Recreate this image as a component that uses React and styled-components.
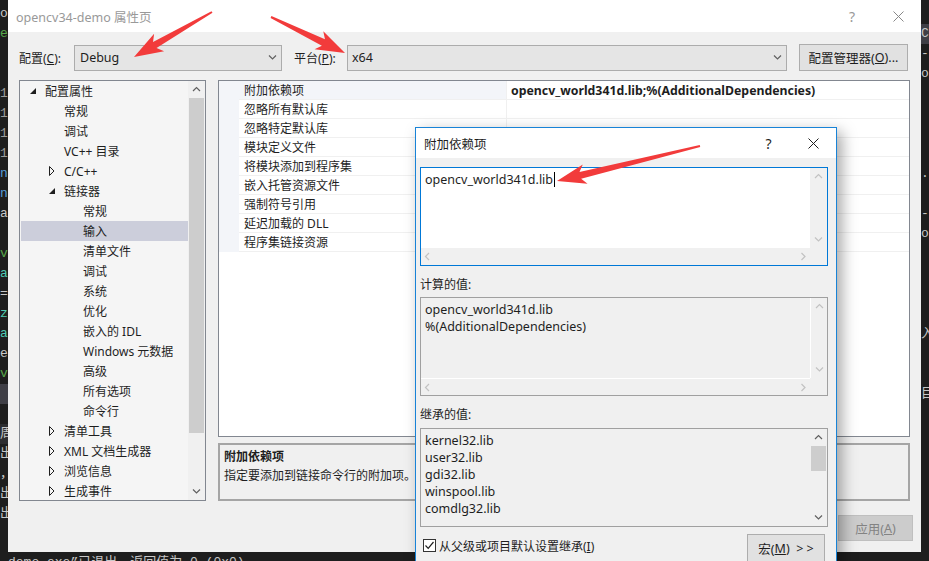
import React from 'react'
import styled, { createGlobalStyle } from 'styled-components'

const UI = `"Noto Sans", "Noto Sans CJK SC", sans-serif`

const GlobalStyle = createGlobalStyle`
  html, body { margin: 0; padding: 0; background: #1e1e1e; }
  body { font-family: ${UI}; font-size: 12px; color: #1e1e1e; }
  * { box-sizing: border-box; }
`

const Screen = styled.div`
  position: relative;
  display: flex;
  width: 929px;
  height: 561px;
  overflow: hidden;
  background: #1e1e1e;
`

const CodeStrip = styled.div`
  width: ${p => p.$w}px;
  flex-shrink: 0;
  overflow: hidden;
  padding-top: 4px;
  font: 13px/20px "Liberation Mono", "Noto Sans CJK SC", monospace;
  white-space: pre;
`

const CodeLine = styled.div`
  height: ${p => p.$h || 20}px;
  color: ${p => p.$c || '#c8c8c8'};
  background: ${p => p.$bg || 'transparent'};
`

const Desk = styled.div`
  width: 913px;
  flex-shrink: 0;
  display: flex;
  flex-direction: column;
`

const Dialog = styled.div`
  height: 552px;
  flex-shrink: 0;
  background: #f0f0f0;
  display: flex;
  flex-direction: column;
`

const TitleBar = styled.div`
  height: ${p => p.$h}px;
  flex-shrink: 0;
  background: #fff;
  display: flex;
  align-items: center;
  padding-left: 8px;
`

const TitleText = styled.div`
  flex: 1;
  font-size: 12.5px;
  color: ${p => (p.$active ? '#1e1e1e' : '#999')};
`

const TitleBtn = styled.div`
  width: ${p => p.$w}px;
  height: 100%;
  display: flex;
  align-items: center;
  justify-content: center;
  font-size: 14px;
  color: ${p => (p.$active ? '#1e1e1e' : '#999')};
`

const Body = styled.div`
  flex: 1;
  display: flex;
  flex-direction: column;
  padding: 12px 11px 0 11px;
`

const ConfigRow = styled.div`
  display: flex;
  align-items: center;
  height: 27px;
`

const Label = styled.div`
  width: ${p => p.$w}px;
  margin-left: ${p => p.$ml || 0}px;
  flex-shrink: 0;
`

const Mn = styled.span`
  text-decoration: underline;
`

const Combo = styled.div`
  width: ${p => p.$w}px;
  height: 26px;
  background: #e5e5e5;
  border: 1px solid #acacac;
  display: flex;
  align-items: center;
  justify-content: space-between;
  padding: 0 4px 0 ${p => p.$pl}px;
  font-size: 12.5px;
`

const Button = styled.div`
  width: ${p => p.$w}px;
  height: ${p => p.$h || 26}px;
  margin-left: ${p => p.$ml || 0}px;
  flex-shrink: 0;
  background: ${p => (p.$disabled ? '#cccccc' : '#e1e1e1')};
  border: 1px solid ${p => (p.$disabled ? '#bfbfbf' : '#adadad')};
  color: ${p => (p.$disabled ? '#838383' : '#1e1e1e')};
  display: flex;
  align-items: center;
  justify-content: center;
  font-size: 12.5px;
`

const MainArea = styled.div`
  display: flex;
  gap: 12px;
  margin-top: 9px;
  height: 421px;
`

const Tree = styled.div`
  width: 187px;
  border: 1px solid #828790;
  background: #f5f5f5;
  display: flex;
  overflow: hidden;
`

const TreeList = styled.div`
  flex: 1;
  padding: 0 0 0 1px;
`

const TreeRow = styled.div`
  height: 20px;
  display: flex;
  align-items: center;
  padding-left: ${p => p.$lvl * 19}px;
  background: ${p => (p.$sel ? '#cccedb' : 'transparent')};
  white-space: nowrap;
`

const Expander = styled.div`
  width: 24px;
  display: flex;
  justify-content: center;
  align-items: center;
`

const VScroll = styled.div`
  width: 17px;
  flex-shrink: 0;
  background: #f0f0f0;
  display: flex;
  flex-direction: column;
  border-left: ${p => (p.$sep ? '1px solid #fff' : 'none')};
`

const ArrowBox = styled.div`
  height: 17px;
  flex-shrink: 0;
  display: flex;
  align-items: center;
  justify-content: center;
`

const Thumb = styled.div`
  height: ${p => p.$h}px;
  margin: 0 1px;
  background: #cdcdcd;
`

const Spacer = styled.div`
  flex: 1;
`

const RightCol = styled.div`
  width: 692px;
  display: flex;
  flex-direction: column;
  gap: 6px;
`

const Grid = styled.div`
  height: 357px;
  border: 1px solid #828790;
  background: #fff;
`

const GridRow = styled.div`
  display: flex;
  height: 19px;
`

const Gutter = styled.div`
  width: 20px;
  background: #f3f5f9;
`

const NameCell = styled.div`
  width: 268px;
  padding-left: 5px;
  display: flex;
  align-items: center;
  background: ${p => (p.$sel ? '#f3f5f9' : '#fff')};
  border-bottom: 1px solid #f0f0f0;
  border-right: 1px solid #f0f0f0;
  white-space: nowrap;
`

const ValueCell = styled.div`
  flex: 1;
  padding-left: 4px;
  display: flex;
  align-items: center;
  font-weight: ${p => (p.$bold ? 700 : 400)};
  font-size: ${p => (p.$bold ? 12.3 : 12)}px;
  border-bottom: 1px solid #f0f0f0;
  white-space: nowrap;
`

const Desc = styled.div`
  height: 58px;
  border: 2px solid #a5a5a5;
  background: #f0f0f0;
  padding: 2px 0 0 4px;
  line-height: 19px;
`

const DescTitle = styled.div`
  font-weight: 700;
`

const Footer = styled.div`
  display: flex;
  justify-content: flex-end;
  gap: 4px;
  margin-top: 14px;
  margin-right: -3px;
`

const OutputLine = styled.div`
  flex: 1;
  overflow: hidden;
  padding: 3px 0 0 0;
  font: 13px/16px "Liberation Mono", "Noto Sans CJK SC", monospace;
  color: #c8c8c8;
  white-space: nowrap;
`

const SubDialog = styled.div`
  position: absolute;
  left: 415px;
  top: 127px;
  width: 422px;
  height: 450px;
  border: 1px solid #1883d7;
  background: #f0f0f0;
  box-shadow: 5px 5px 14px rgba(0, 0, 0, 0.35);
  display: flex;
  flex-direction: column;
`

const SubBody = styled.div`
  display: flex;
  flex-direction: column;
  padding: 9px 8px 0 4px;
`

const Field = styled.div`
  height: 99px;
  border: 1px solid ${p => p.$border};
  display: grid;
  grid-template-columns: 1fr 17px;
  grid-template-rows: ${p => (p.$hscroll ? '1fr 17px' : '1fr')};
  margin-top: ${p => p.$mt || 0}px;
`

const FieldText = styled.div`
  background: ${p => p.$bg};
  padding: 3px 0 0 4px;
  line-height: 17px;
  font-size: 12.5px;
  white-space: pre;
`

const HScroll = styled.div`
  background: #f0f0f0;
  display: flex;
  align-items: center;
  justify-content: space-between;
  padding: 0 3px;
  border-top: ${p => (p.$sep ? '1px solid #fff' : 'none')};
`

const Corner = styled.div`
  background: #f0f0f0;
`

const Caret = styled.span`
  display: inline-block;
  width: 1px;
  height: 15px;
  background: #000;
  vertical-align: -3px;
  margin-left: 1px;
`

const SubLabel = styled.div`
  margin-top: 11px;
  height: 16px;
  line-height: 16px;
`

const SubFooter = styled.div`
  display: flex;
  align-items: center;
  justify-content: space-between;
  margin-top: 7px;
  padding-left: 3px;
  padding-right: 3px;
`

const CheckWrap = styled.div`
  display: flex;
  align-items: center;
  gap: 3px;
  margin-top: -5px;
`

const CheckBox = styled.div`
  width: 13px;
  height: 13px;
  border: 1px solid #333;
  background: #fff;
  display: flex;
  align-items: center;
  justify-content: center;
`

const ArrowLayer = styled.svg`
  position: absolute;
  left: 0;
  top: 0;
  pointer-events: none;
`

const Chevron = ({ dir, color = '#606060' }) => {
  const d = {
    up: 'M1 5 L4.5 1.5 L8 5',
    down: 'M1 1.5 L4.5 5 L8 1.5',
    left: 'M5 1 L1.5 4.5 L5 8',
    right: 'M1.5 1 L5 4.5 L1.5 8'
  }[dir]
  const horiz = dir === 'left' || dir === 'right'
  return (
    <svg width={horiz ? 7 : 9} height={horiz ? 9 : 7} viewBox={horiz ? '0 0 7 9' : '0 0 9 7'}>
      <path d={d} fill="none" stroke={color} strokeWidth="1.2" />
    </svg>
  )
}

const CloseIcon = ({ color }) => (
  <svg width="11" height="11" viewBox="0 0 11 11">
    <path d="M0.5 0.5 L10.5 10.5 M10.5 0.5 L0.5 10.5" stroke={color} strokeWidth="1" />
  </svg>
)

const Open = () => (
  <svg width="6" height="6" viewBox="0 0 6 6">
    <polygon points="6,0 6,6 0,6" fill="#1e1e1e" />
  </svg>
)

const Closed = () => (
  <svg width="6" height="10" viewBox="0 0 6 10">
    <polygon points="0.5,0.5 5,5 0.5,9.5" fill="none" stroke="#1e1e1e" strokeWidth="1" />
  </svg>
)

// tapered shaft with a swept-back head, like a screenshot annotation arrow
const arrowPoints = (x1, y1, x2, y2) => {
  const len = Math.hypot(x2 - x1, y2 - y1)
  const ux = (x2 - x1) / len
  const uy = (y2 - y1) / len
  const nx = -uy
  const ny = ux
  const head = 24
  const bx = x2 - ux * head
  const by = y2 - uy * head
  const wx = bx - ux * 5
  const wy = by - uy * 5
  const p = [
    [x1 + nx * 1, y1 + ny * 1],
    [bx + nx * 3.5, by + ny * 3.5],
    [wx + nx * 10, wy + ny * 10],
    [x2, y2],
    [wx - nx * 10, wy - ny * 10],
    [bx - nx * 3.5, by - ny * 3.5],
    [x1 - nx * 1, y1 - ny * 1]
  ]
  return p.map(q => q.join(',')).join(' ')
}

const leftCode = [
  ['o'], ['er', '#57a64a'], [''], [''], ['1(', '#9b9b9b'], ['1(', '#9b9b9b'], ['1(', '#9b9b9b'],
  ['1(', '#9b9b9b'], ['n', '#569cd6'], ['n', '#569cd6'], ['ai'], [''], ['v', '#57a64a'],
  ['at', '#4ec9b0'], ['=N'], ['z', '#4ec9b0'], ['at', '#4ec9b0'], ['es'], ['v', '#57a64a'],
  ['', null, '#3f3f46'], [''], ['周', '#c8c8c8', '#2d2d30'], ['出'], ['，'], ['出'], ['出']
]

const rightCode = [
  [''], ['C', '#c8c8c8', '#3f3f46'], ['-'], ['o'], [''], [''], [''], [''], ['.h'],
  [''], ['-'], ['o'], [''], [''], [''], [''], ['入'], [''], [''], ['目'], [''], [''], [''], ['']
]

const tree = [
  { t: '配置属性', lvl: 0, exp: 'open' },
  { t: '常规', lvl: 1 },
  { t: '调试', lvl: 1 },
  { t: 'VC++ 目录', lvl: 1 },
  { t: 'C/C++', lvl: 1, exp: 'closed' },
  { t: '链接器', lvl: 1, exp: 'open' },
  { t: '常规', lvl: 2 },
  { t: '输入', lvl: 2, sel: true },
  { t: '清单文件', lvl: 2 },
  { t: '调试', lvl: 2 },
  { t: '系统', lvl: 2 },
  { t: '优化', lvl: 2 },
  { t: '嵌入的 IDL', lvl: 2 },
  { t: 'Windows 元数据', lvl: 2 },
  { t: '高级', lvl: 2 },
  { t: '所有选项', lvl: 2 },
  { t: '命令行', lvl: 2 },
  { t: '清单工具', lvl: 1, exp: 'closed' },
  { t: 'XML 文档生成器', lvl: 1, exp: 'closed' },
  { t: '浏览信息', lvl: 1, exp: 'closed' },
  { t: '生成事件', lvl: 1, exp: 'closed' }
]

const props = [
  { n: '附加依赖项', v: 'opencv_world341d.lib;%(AdditionalDependencies)', sel: true },
  { n: '忽略所有默认库' },
  { n: '忽略特定默认库' },
  { n: '模块定义文件' },
  { n: '将模块添加到程序集' },
  { n: '嵌入托管资源文件' },
  { n: '强制符号引用' },
  { n: '延迟加载的 DLL' },
  { n: '程序集链接资源' }
]

const inherited = ['kernel32.lib', 'user32.lib', 'gdi32.lib', 'winspool.lib', 'comdlg32.lib']

const App = () => {
  return (
    <Screen>
      <GlobalStyle />
      <CodeStrip $w={8}>
        {leftCode.map(([t, c, bg], i) => (
          <CodeLine key={i} $c={c} $bg={bg}>{t}</CodeLine>
        ))}
      </CodeStrip>

      <Desk>
        <Dialog>
          <TitleBar $h={32}>
            <TitleText>opencv34-demo 属性页</TitleText>
            <TitleBtn $w={46}>?</TitleBtn>
            <TitleBtn $w={46}><CloseIcon color="#888" /></TitleBtn>
          </TitleBar>
          <Body>
            <ConfigRow>
              <Label $w={55}>配置(<Mn>C</Mn>):</Label>
              <Combo $w={208} $pl={5}>
                <span>Debug</span>
                <Chevron dir="down" />
              </Combo>
              <Label $w={53} $ml={12}>平台(<Mn>P</Mn>):</Label>
              <Combo $w={440} $pl={4}>
                <span>x64</span>
                <Chevron dir="down" />
              </Combo>
              <Button $w={109} $h={27} $ml={12}>配置管理器(<Mn>O</Mn>)...</Button>
            </ConfigRow>

            <MainArea>
              <Tree>
                <TreeList>
                  {tree.map((r, i) => (
                    <TreeRow key={i} $lvl={r.lvl} $sel={r.sel}>
                      <Expander>
                        {r.exp === 'open' && <Open />}
                        {r.exp === 'closed' && <Closed />}
                      </Expander>
                      {r.t}
                    </TreeRow>
                  ))}
                </TreeList>
                <VScroll>
                  <ArrowBox><Chevron dir="up" /></ArrowBox>
                  <Thumb $h={335} />
                  <Spacer />
                  <ArrowBox><Chevron dir="down" /></ArrowBox>
                </VScroll>
              </Tree>

              <RightCol>
                <Grid>
                  {props.map((p, i) => (
                    <GridRow key={i}>
                      <Gutter />
                      <NameCell $sel={p.sel}>{p.n}</NameCell>
                      <ValueCell $bold={!!p.v}>{p.v}</ValueCell>
                    </GridRow>
                  ))}
                </Grid>
                <Desc>
                  <DescTitle>附加依赖项</DescTitle>
                  <div>指定要添加到链接命令行的附加项。</div>
                </Desc>
              </RightCol>
            </MainArea>

            <Footer>
              <Button $w={75}>确定</Button>
              <Button $w={75}>取消</Button>
              <Button $w={75} $disabled>应用(<Mn>A</Mn>)</Button>
            </Footer>
          </Body>
        </Dialog>
        <OutputLine>demo.exe”已退出，返回值为 0 (0x0)。</OutputLine>
      </Desk>

      <CodeStrip $w={8}>
        {rightCode.map(([t, c, bg], i) => (
          <CodeLine key={i} $c={c} $bg={bg}>{t}</CodeLine>
        ))}
      </CodeStrip>

      <SubDialog>
        <TitleBar $h={30}>
          <TitleText $active>附加依赖项</TitleText>
          <TitleBtn $w={45} $active>?</TitleBtn>
          <TitleBtn $w={45} $active><CloseIcon color="#1e1e1e" /></TitleBtn>
        </TitleBar>
        <SubBody>
          <Field $border="#0078d7" $hscroll>
            <FieldText $bg="#fff">opencv_world341d.lib<Caret /></FieldText>
            <VScroll>
              <ArrowBox><Chevron dir="up" color="#c2c2c2" /></ArrowBox>
              <Spacer />
              <ArrowBox><Chevron dir="down" color="#c2c2c2" /></ArrowBox>
            </VScroll>
            <HScroll>
              <Chevron dir="left" color="#c2c2c2" />
              <Chevron dir="right" color="#c2c2c2" />
            </HScroll>
            <Corner />
          </Field>

          <SubLabel>计算的值:</SubLabel>
          <Field $border="#a0a0a0" $hscroll $mt={4}>
            <FieldText $bg="#f0f0f0">{'opencv_world341d.lib\n%(AdditionalDependencies)'}</FieldText>
            <VScroll $sep>
              <ArrowBox><Chevron dir="up" color="#c2c2c2" /></ArrowBox>
              <Spacer />
              <ArrowBox><Chevron dir="down" color="#c2c2c2" /></ArrowBox>
            </VScroll>
            <HScroll $sep>
              <Chevron dir="left" color="#c2c2c2" />
              <Chevron dir="right" color="#c2c2c2" />
            </HScroll>
            <Corner />
          </Field>

          <SubLabel>继承的值:</SubLabel>
          <Field $border="#a0a0a0" $mt={5}>
            <FieldText $bg="#f0f0f0">{inherited.join('\n')}</FieldText>
            <VScroll>
              <ArrowBox><Chevron dir="up" /></ArrowBox>
              <Thumb $h={25} />
              <Spacer />
              <ArrowBox><Chevron dir="down" /></ArrowBox>
            </VScroll>
          </Field>

          <SubFooter>
            <CheckWrap>
              <CheckBox>
                <svg width="11" height="11" viewBox="0 0 11 11">
                  <path d="M1.5 5.5 L4.2 8.3 L9.5 2" fill="none" stroke="#1e1e1e" strokeWidth="1.2" />
                </svg>
              </CheckBox>
              <span>从父级或项目默认设置继承(<Mn>I</Mn>)</span>
            </CheckWrap>
            <Button $w={78} $h={28}>宏(<Mn>M</Mn>)&nbsp;&nbsp;&gt; &gt;</Button>
          </SubFooter>
        </SubBody>
      </SubDialog>

      <ArrowLayer width="929" height="561" viewBox="0 0 929 561">
        <polygon points={arrowPoints(212, 12, 134, 57)} fill="#f23b3b" />
        <polygon points={arrowPoints(271, 17, 345, 53)} fill="#f23b3b" />
        <polygon points={arrowPoints(700, 146, 557, 181)} fill="#f23b3b" />
      </ArrowLayer>
    </Screen>
  )
}

export default App
